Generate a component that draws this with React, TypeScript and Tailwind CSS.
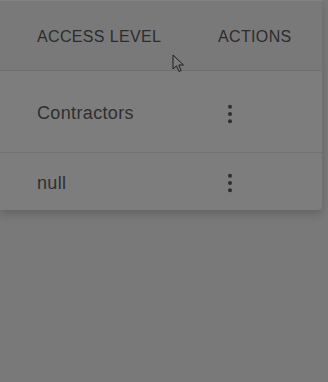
import React from "react";

function Dots() {
  return (
    <svg width="8" height="22" viewBox="0 0 8 22" className="block">
      <circle cx="4" cy="3.7" r="2" fill="#2e2e2e" />
      <circle cx="4" cy="11" r="2" fill="#2e2e2e" />
      <circle cx="4" cy="18.3" r="2" fill="#2e2e2e" />
    </svg>
  );
}

export default function App() {
  const font = { fontFamily: '"Liberation Sans", Arial, sans-serif' };
  return (
    <div className="relative w-[328px] h-[382px] overflow-hidden bg-[#797979]" style={font}>
      <div className="w-[322px] rounded-br-[4px] bg-[#7d7d7d] shadow-[0_4px_10px_rgba(0,0,0,0.18)]">
        <div className="h-px bg-[#838383]" />
        <div className="flex h-[70px] items-center bg-[#797979] border-b border-[#6f6f6f]">
          <div className="w-[218px] pl-[37px] text-[16px] tracking-[0.35px] text-[#2c2c2c] pt-[3px]">
            ACCESS LEVEL
          </div>
          <div className="text-[16px] tracking-[0.35px] text-[#2c2c2c] pt-[3px]">ACTIONS</div>
        </div>
        <div className="flex h-[82px] items-center border-b border-[#737373]">
          <div className="w-[218px] pl-[37px] text-[18px] tracking-[0.35px] text-[#2f2f2f] pt-[3px]">
            Contractors
          </div>
          <div className="pl-[8px] pt-[4px]">
            <Dots />
          </div>
        </div>
        <div className="flex h-[57px] items-center">
          <div className="w-[218px] pl-[37px] text-[18px] tracking-[0.35px] text-[#2f2f2f] pt-[4px]">null</div>
          <div className="pl-[8px] pt-[2px]">
            <Dots />
          </div>
        </div>
      </div>
      <svg
        className="absolute left-[172px] top-[54px]"
        width="14"
        height="20"
        viewBox="0 0 14 20"
      >
        <path
          d="M1 1 L1 15 L4.5 11.8 L7 17.5 L9.2 16.5 L6.8 11 L11.5 11 Z"
          fill="#7e7e7e"
          stroke="#1e1e1e"
          strokeWidth="1"
          strokeLinejoin="round"
        />
      </svg>
    </div>
  );
}
